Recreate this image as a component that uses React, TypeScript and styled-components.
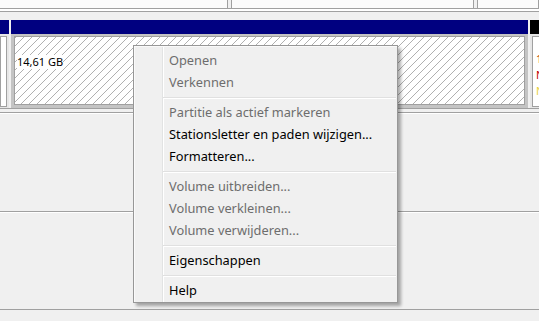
import styled, { createGlobalStyle } from 'styled-components'

const GlobalStyles = createGlobalStyle`
  html, body {
    margin: 0;
    padding: 0;
    background: #f0f0f0;
  }
  body {
    font-family: "Noto Sans", "DejaVu Sans", sans-serif;
    font-size: 12px;
  }
`

type MenuEntry = { label: string; disabled?: boolean } | 'sep'

const menuEntries: MenuEntry[] = [
  { label: 'Openen', disabled: true },
  { label: 'Verkennen', disabled: true },
  'sep',
  { label: 'Partitie als actief markeren', disabled: true },
  { label: 'Stationsletter en paden wijzigen...' },
  { label: 'Formatteren...' },
  'sep',
  { label: 'Volume uitbreiden...', disabled: true },
  { label: 'Volume verkleinen...', disabled: true },
  { label: 'Volume verwijderen...', disabled: true },
  'sep',
  { label: 'Eigenschappen' },
  'sep',
  { label: 'Help' },
]

function App() {
  return (
    <>
      <GlobalStyles />
      <Page>
        <TopStrip>
          <TopCell $width={228} />
          <TopCell $width={243} $left />
          <TopCell $width={62} $left />
        </TopStrip>
        <EtchedGap />

        <DiskRow>
          <Partition $width={9}>
            <PartHeader $color="#000080" />
            <PartBody>
              <PartInner />
            </PartBody>
          </Partition>

          <Partition $width={517}>
            <PartHeader $color="#000080" />
            <PartBody $selected>
              <PartInner $hatched>
                <SizeLabel>14,61 GB</SizeLabel>
              </PartInner>
            </PartBody>
          </Partition>

          <Partition $width={20}>
            <PartHeader $color="#000000" />
            <PartBody $lead={2}>
              <PartInner $offset={3} $top={14}>
                <ClippedText $color="#c04000">1</ClippedText>
                <ClippedText $color="#c00000">N</ClippedText>
                <ClippedText $color="#e8d040">N</ClippedText>
              </PartInner>
            </PartBody>
          </Partition>
        </DiskRow>

        <Rule $top={3} $etched />
        <EmptyArea $height={97} />
        <Rule $etched />
        <EmptyArea $height={96} />
        <Rule />

        <Menu>
          {menuEntries.map((entry, i) =>
            entry === 'sep' ? (
              <Separator key={i}>
                <SeparatorLine />
              </Separator>
            ) : (
              <MenuItem key={i} $disabled={entry.disabled}>
                {entry.label}
              </MenuItem>
            )
          )}
        </Menu>
      </Page>
    </>
  )
}

const Page = styled.div`
  position: relative;
  width: 539px;
  height: 321px;
  overflow: hidden;
  background: #f0f0f0;
`

const TopStrip = styled.div`
  display: flex;
  gap: 3px;
  height: 8px;
  border-bottom: 1px solid #a0a0a0;
`

const TopCell = styled.div<{ $width: number; $left?: boolean }>`
  flex: 0 0 ${p => p.$width}px;
  box-sizing: border-box;
  background: #fbfbfb;
  border-right: 1px solid #a0a0a0;
  border-left: ${p => (p.$left ? '1px solid #a0a0a0' : 'none')};
`

const EtchedGap = styled.div`
  height: 2px;
  background: #ffffff;
  border-bottom: 1px solid #a0a0a0;
`

const DiskRow = styled.div`
  display: flex;
  gap: 2px;
  margin-top: 8px;
  height: 88px;
  border-bottom: 1px solid #a0a0a0;
`

const Partition = styled.div<{ $width: number }>`
  flex: 0 0 ${p => p.$width}px;
  display: flex;
  flex-direction: column;
`

const PartHeader = styled.div<{ $color: string }>`
  height: 14px;
  background: ${p => p.$color};
`

const PartBody = styled.div<{ $selected?: boolean; $lead?: number }>`
  flex: 1;
  display: flex;
  padding: ${p =>
    p.$selected ? '2px 3px 3px 3px' : `2px 2px 1px ${p.$lead ?? 0}px`};
  background: ${p => (p.$selected ? '#c4c4c4' : '#e6e6e6')};
`

const PartInner = styled.div<{ $hatched?: boolean; $offset?: number; $top?: number }>`
  flex: 1;
  min-width: 0;
  overflow: hidden;
  border: 1px solid #a0a0a0;
  background: ${p =>
    p.$hatched
      ? 'repeating-linear-gradient(135deg, #b0b0b0 0px, #b0b0b0 0.7px, #ffffff 1.2px, #ffffff 5.657px)'
      : '#ffffff'};
  padding: ${p => p.$top ?? 18}px 0 0 ${p => p.$offset ?? 2}px;
  display: flex;
  flex-direction: column;
  align-items: flex-start;
  font-size: 11px;
`

const SizeLabel = styled.span`
  background: #ffffff;
  color: #000000;
  line-height: 14px;
  white-space: nowrap;
`

const ClippedText = styled.span<{ $color: string }>`
  color: ${p => p.$color};
  line-height: 16px;
  white-space: nowrap;
`

const Rule = styled.div<{ $top?: number; $etched?: boolean }>`
  margin-top: ${p => p.$top ?? 0}px;
  border-top: 1px solid #a0a0a0;
  border-bottom: ${p => (p.$etched ? '1px solid #ffffff' : 'none')};
`

const EmptyArea = styled.div<{ $height: number }>`
  height: ${p => p.$height}px;
`

const Menu = styled.div`
  position: absolute;
  left: 133px;
  top: 45px;
  width: 265px;
  box-sizing: border-box;
  padding: 3px 1px 1px 2px;
  border: 1px solid #979797;
  background:
    linear-gradient(
      to right,
      transparent 28px,
      #e2e3e3 28px,
      #e2e3e3 29px,
      #ffffff 29px,
      #ffffff 30px,
      transparent 30px
    ),
    #f0f0f0;
  box-shadow: inset 1px 1px 0 #fafafa, 3px 3px 3px rgba(0, 0, 0, 0.32);
  display: flex;
  flex-direction: column;
  font-size: 12.8px;
`

const MenuItem = styled.div<{ $disabled?: boolean }>`
  height: 22px;
  line-height: 22px;
  padding-left: 33px;
  color: ${p => (p.$disabled ? '#6d6d6d' : '#000000')};
  white-space: nowrap;
  cursor: default;
`

const Separator = styled.div`
  height: 8px;
  box-sizing: border-box;
  padding: 4px 0 0 27px;
`

const SeparatorLine = styled.div`
  border-top: 1px solid #e0e0e0;
  border-bottom: 1px solid #ffffff;
`

export default App
